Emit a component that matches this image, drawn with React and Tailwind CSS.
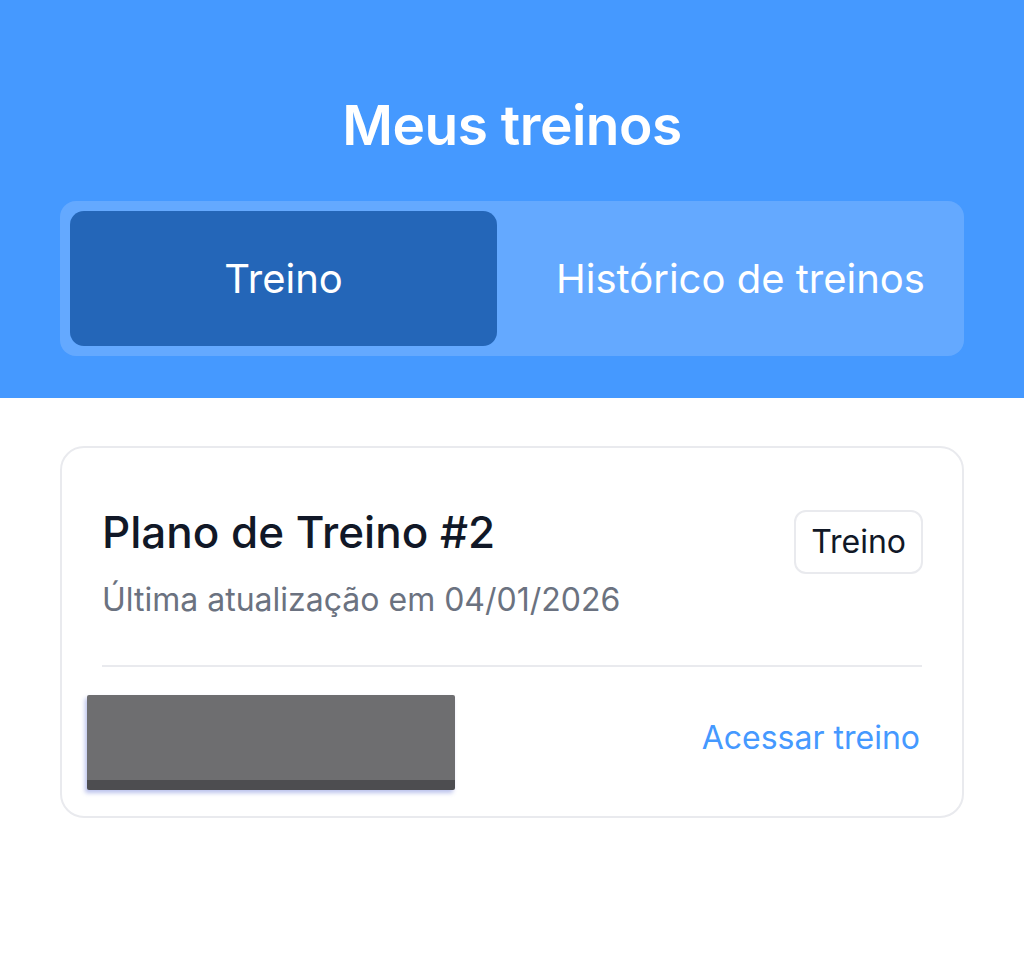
import React from 'react';

const tabs = ['Treino', 'Histórico de treinos'];

const App = () => {
  const active = 0;

  return (
    <div className="min-h-[967px] bg-white font-['Inter',sans-serif]">
      {/* Header */}
      <header className="bg-[#4599ff] h-[398px] px-[60px] pt-[94px]">
        <h1 className="text-center text-white text-[55px] leading-[62px] font-semibold tracking-[-0.5px]">
          Meus treinos
        </h1>
        <div className="mt-[45px] bg-[#64a9ff] rounded-[16px] p-[10px] grid grid-cols-2 gap-[30px]">
          {tabs.map((tab, i) => (
            <button
              key={tab}
              className={
                'h-[135px] rounded-[14px] text-white text-[40px] ' +
                (i === active ? 'bg-[#2466b8]' : 'bg-transparent')
              }
            >
              {tab}
            </button>
          ))}
        </div>
      </header>

      {/* Content */}
      <main className="px-[60px] pt-[48px]">
        <div className="border-2 border-[#e9eaee] rounded-[24px] px-[40px] pt-[58px] pb-[26px]">
          <div className="flex items-start justify-between">
            <div>
              <h2 className="text-[44px] leading-[52px] font-medium text-[#111827]">
                Plano de Treino #2
              </h2>
              <p className="mt-[23px] text-[32px] leading-[38px] text-[#6b7280]">
                Última atualização em 04/01/2026
              </p>
            </div>
            <span className="mt-[4px] -mr-[1px] border-2 border-[#e9eaee] rounded-[12px] px-[15px] h-[64px] flex items-center text-[32px] text-[#111827]">
              Treino
            </span>
          </div>

          <div className="mt-[46px] h-[2px] bg-[#e9eaee]" />

          <div className="flex items-center justify-between mt-[28px]">
            {/* redacted area */}
            <div className="-ml-[15px] w-[368px] h-[95px] rounded-[2px] bg-[#6e6e70] border-b-[10px] border-[#4d4d50] shadow-[-2px_3px_4px_rgba(60,80,200,0.35)]" />
            <a href="#" className="text-[32px] text-[#4599ff] mr-[2px] mb-[10px]">
              Acessar treino
            </a>
          </div>
        </div>
      </main>
    </div>
  );
};

export default App;
